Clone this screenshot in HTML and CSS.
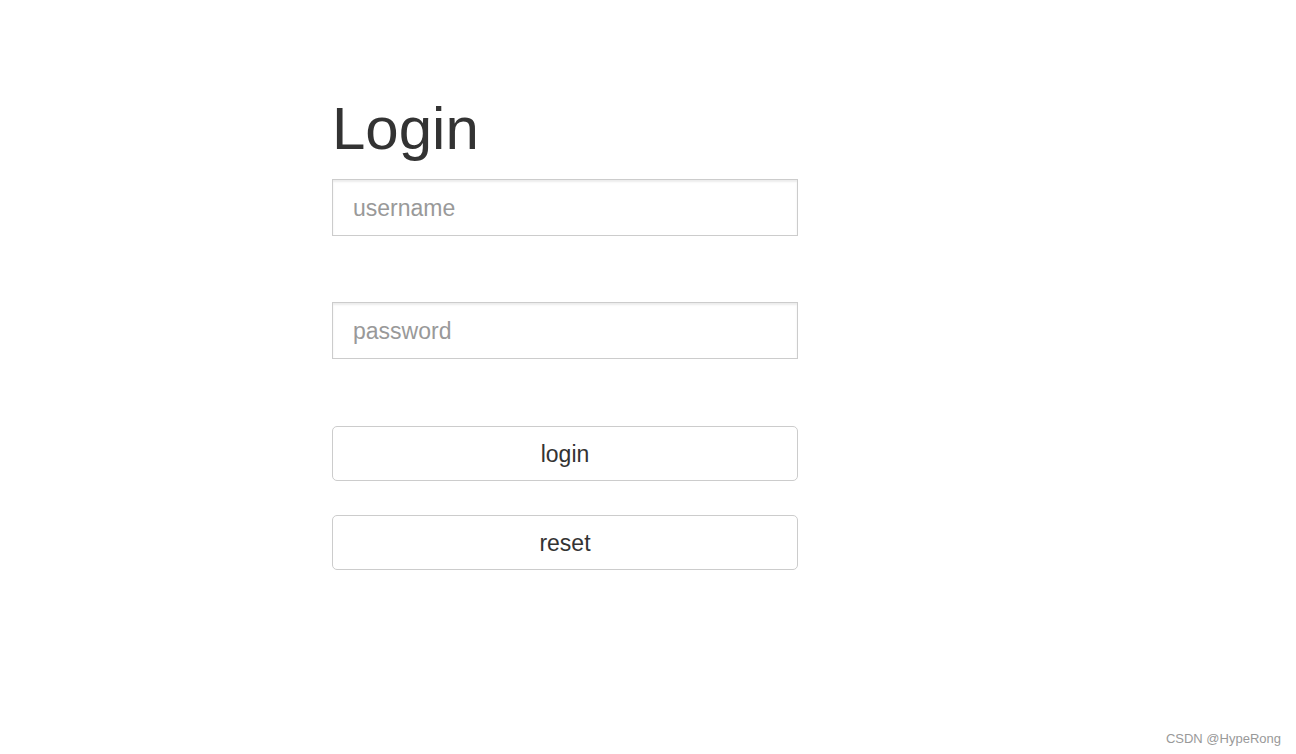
FILE: index.html
```html
<!DOCTYPE html>
<html>
<head>
<meta charset="utf-8">
<title>Login</title>
<link rel="stylesheet" href="styles.css">
</head>
<body>
<main class="page">
  <form class="login-form">
    <h1 class="title">Login</h1>
    <input class="field" type="text" placeholder="username">
    <input class="field" type="password" placeholder="password">
    <button class="btn btn-login" type="button">login</button>
    <button class="btn btn-reset" type="button">reset</button>
  </form>
</main>
<div class="watermark">CSDN @HypeRong</div>
</body>
</html>
```
FILE: styles.css
```css
html, body {
  margin: 0;
  padding: 0;
  background: #fff;
}
body {
  font-family: "Liberation Sans", Arial, sans-serif;
  color: #333;
  width: 1296px;
  height: 754px;
  overflow: hidden;
}
.page {
  padding-left: 332px;
  padding-top: 93px;
}
.login-form {
  width: 466px;
  display: flex;
  flex-direction: column;
}
.title {
  margin: 0 0 14px 0;
  font-size: 60px;
  font-weight: 400;
  line-height: 72px;
  color: #333;
}
.field {
  box-sizing: border-box;
  height: 57px;
  width: 466px;
  margin: 0 0 66px 0;
  padding: 2px 20px 0 20px;
  border: 1px solid #ccc;
  border-radius: 0;
  font-family: "Liberation Sans", Arial, sans-serif;
  font-size: 23px;
  color: #555;
  box-shadow: inset 0 2px 2px rgba(0,0,0,0.075);
  outline: none;
}
.field::placeholder {
  color: #999;
}
.btn {
  box-sizing: border-box;
  height: 55px;
  width: 466px;
  margin: 1px 0 33px 0;
  padding: 2px 0 0 0;
  border: 1px solid #ccc;
  border-radius: 5px;
  background: #fff;
  font-family: "Liberation Sans", Arial, sans-serif;
  font-size: 23px;
  color: #333;
}
.watermark {
  position: absolute;
  right: 15px;
  bottom: 8px;
  font-family: "Liberation Sans", Arial, sans-serif;
  font-size: 13px;
  color: #999;
}
```
